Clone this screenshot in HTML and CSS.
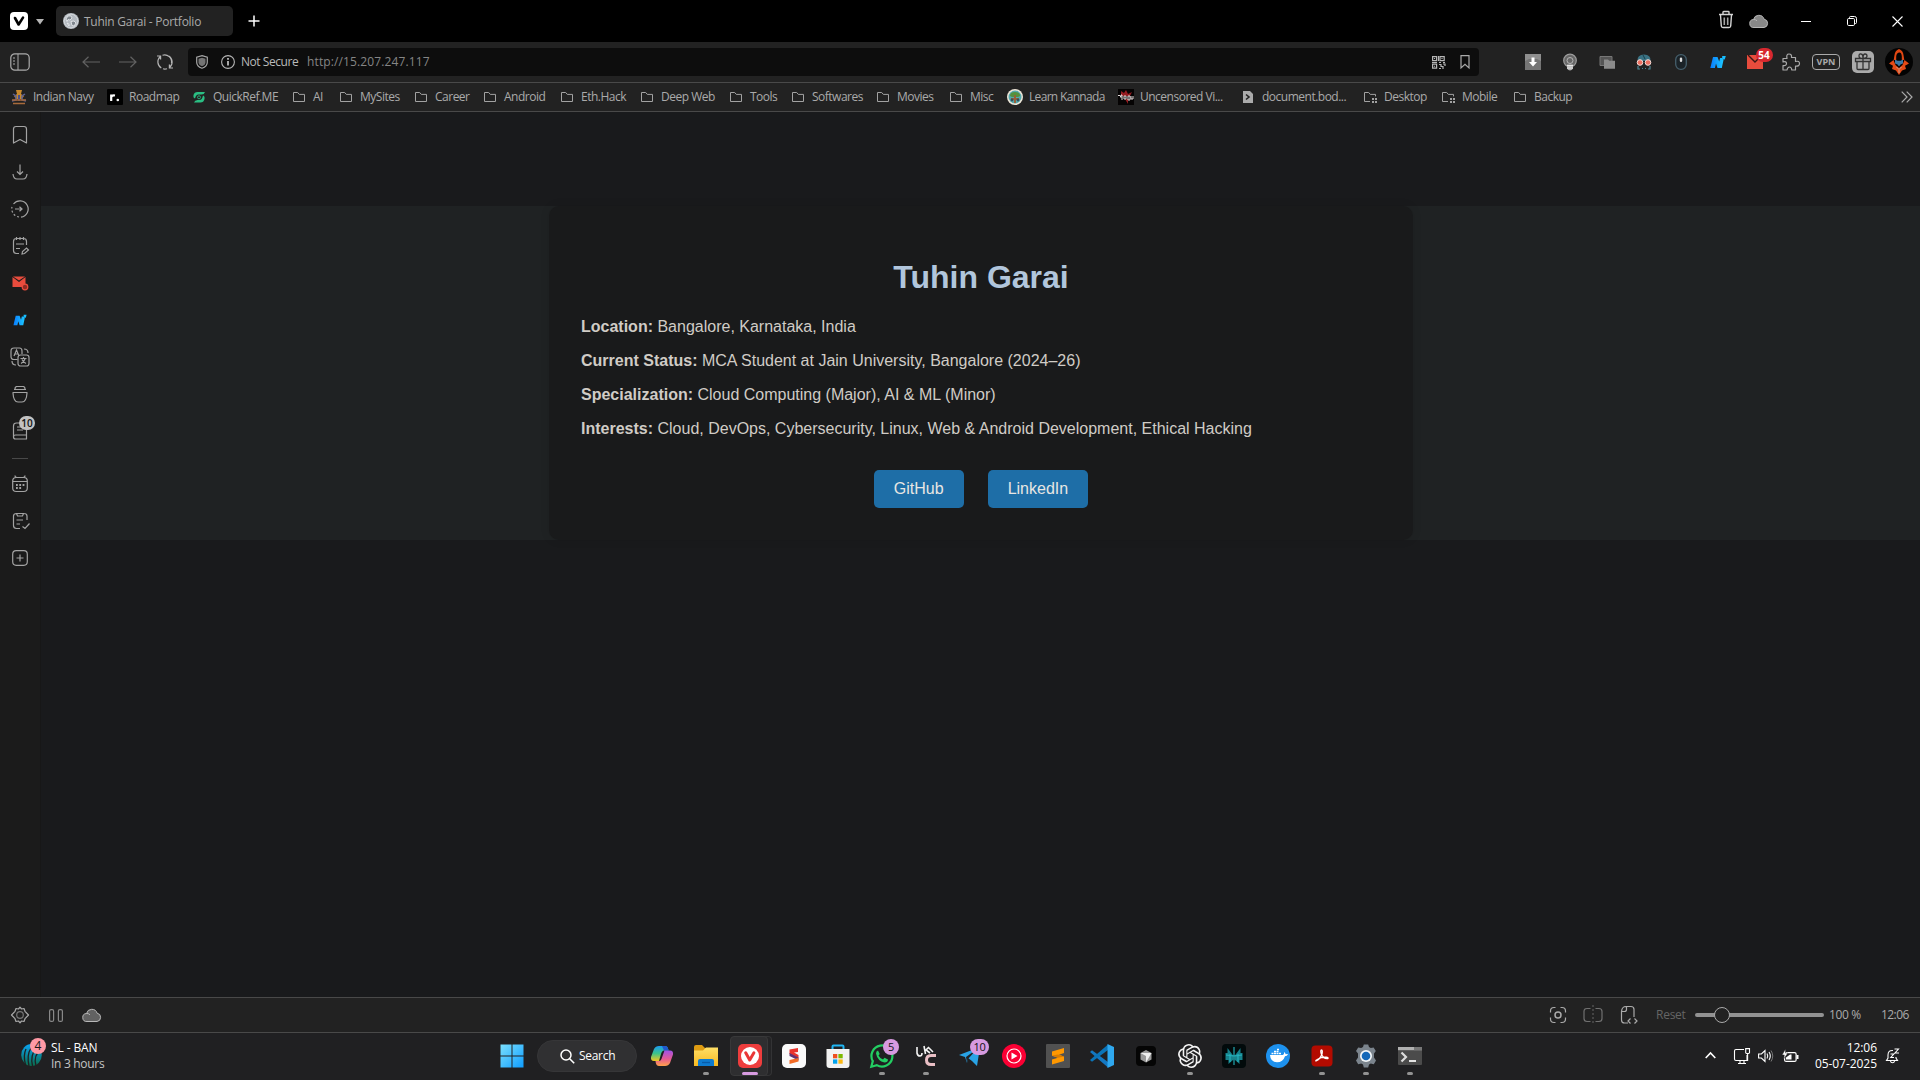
FILE: index.html
```html
<!DOCTYPE html>
<html lang="en">
<head>
<meta charset="utf-8">
<title>Tuhin Garai - Portfolio</title>
<link rel="stylesheet" href="styles.css">
</head>
<body>
<svg class="defs" width="0" height="0">
  <defs>
    <linearGradient id="win" x1="0" y1="0" x2="1" y2="1"><stop offset="0" stop-color="#7be0fd"/><stop offset="1" stop-color="#0f9dff"/></linearGradient>
    <linearGradient id="globe" x1="0" y1="0" x2="0" y2="1"><stop offset="0" stop-color="#0aa5f5"/><stop offset="1" stop-color="#0a6b4b"/></linearGradient>
    <linearGradient id="cop1" x1="0" y1="0" x2="0" y2="1"><stop offset="0" stop-color="#1c9bf0"/><stop offset=".5" stop-color="#3cc48a"/><stop offset="1" stop-color="#f3c81e"/></linearGradient>
    <linearGradient id="cop2" x1="0" y1="0" x2="0" y2="1"><stop offset="0" stop-color="#a052e8"/><stop offset=".55" stop-color="#e65b92"/><stop offset="1" stop-color="#ffa24a"/></linearGradient>
    <linearGradient id="fold" x1="0" y1="0" x2="0" y2="1"><stop offset="0" stop-color="#ffdf66"/><stop offset="1" stop-color="#f8b920"/></linearGradient>
    <linearGradient id="en" x1="0" y1="0" x2="1" y2="0"><stop offset="0" stop-color="#0a7cff"/><stop offset="1" stop-color="#1cc8ff"/></linearGradient>
    <symbol id="folder" viewBox="0 0 16 16"><path d="M2.5 3.5h4.2l1.6 1.9h5.2v7.1h-11z" fill="none" stroke="#a2a2a2"/></symbol>
    <symbol id="folder-grid" viewBox="0 0 16 16"><path d="M8 12.500H2.500v-9h4.200l1.600 1.900h5.200v2" fill="none" stroke="#a2a2a2"/><path d="M10 9h2v2h-2zM13 9h2v2h-2zM10 12h2v2h-2zM13 12h2v2h-2z" fill="#a2a2a2"/></symbol>
    <symbol id="cloud" viewBox="0 0 20 16"><path d="M5 14.500a4 4 0 0 1-.5-8 5.500 5.500 0 0 1 10.600-.3A4.200 4.200 0 0 1 15 14.500z" fill="currentColor"/><path d="M5 14.500a4 4 0 0 1-.5-8q2-.3 3.500 1.300M4.500 6.500a5.500 5.500 0 0 1 10.600-.3A4.200 4.200 0 0 1 15 14.500H5" fill="none" stroke="#b8b8b8"/></symbol>
    <symbol id="ns" viewBox="0 0 16 14"><path d="M3 2h4.500l1.700 4.600L10.100 3H12l1.500 2-1.700 8H7.500L6 8.600 4.900 13H.3z" fill="url(#en)"/><path d="M12.200 1h3.600l-1.100 3.500h-2.500z" fill="#18bdff"/></symbol>
  </defs>
</svg>
<div class="screen">
  <header class="titlebar">
    <svg class="logo" width="18" height="18" viewBox="0 0 18 18"><rect width="18" height="18" rx="4" fill="#fff"/><path d="M5 6l3.600 6.500L13 5.600" fill="none" stroke="#000" stroke-width="2.600" stroke-linecap="round" stroke-linejoin="round"/></svg>
    <svg class="caret" width="8" height="6" viewBox="0 0 8 6"><path d="M0 0h8L4 5.500z" fill="#b5b5b5"/></svg>
    <div class="tab">
      <svg width="16" height="16" viewBox="0 0 16 16"><circle cx="8" cy="8" r="8" fill="#b4bac0"/><circle cx="8" cy="8" r="6.800" fill="none" stroke="#d9dde0" stroke-width=".8"/><path d="M3 6l2-3h3l1 2-2 2-2-.5-1 2zM8 8.500l3-.5 2 2-2 3-2-.5zM4 10l2 1v2z" fill="#7f868d" stroke="#eceff1" stroke-width=".8"/></svg>
      <span>Tuhin Garai - Portfolio</span>
    </div>
    <svg class="plus" width="12" height="12" viewBox="0 0 12 12"><path d="M6 .5v11M.5 6h11" stroke="#fff" stroke-width="1.500"/></svg>
    <div class="wincontrols">
      <svg width="16" height="20" viewBox="0 0 16 20"><path d="M1 4.500h14M5 4V2.200q0-.7.7-.7h4.600q.7 0 .7.700V4M2.500 5l.8 11q.1 1.500 1.700 1.500h6q1.600 0 1.700-1.500l.8-11" fill="none" stroke="#d4d4d4" stroke-width="1.400"/><path d="M6.300 7.500v7.500M9.700 7.500v7.500" stroke="#a5a5a5" stroke-width="1.600"/></svg>
      <svg class="sync" width="20" height="16"><use href="#cloud"/></svg>
      <svg width="10" height="10" viewBox="0 0 10 10"><path d="M0 5.500h10" stroke="#fff"/></svg>
      <svg width="10" height="10" viewBox="0 0 10 10"><rect x=".5" y="2.500" width="7" height="7" rx="1.200" fill="none" stroke="#fff"/><path d="M2.500 2V1.500q0-1 1-1h4q2 0 2 2v4q0 1-1 1H8" fill="none" stroke="#fff"/></svg>
      <svg width="11" height="11" viewBox="0 0 11 11"><path d="M.5.500l10 10M10.500.500l-10 10" stroke="#fff" stroke-width="1.100"/></svg>
    </div>
  </header>

  <nav class="toolbar">
    <svg class="panelbtn" width="20" height="18" viewBox="0 0 20 18"><rect x=".8" y=".8" width="18.400" height="16.400" rx="4" fill="none" stroke="#aaa" stroke-width="1.200"/><path d="M8 1v16" stroke="#aaa"/><path d="M3 5h3M3 8h3M3 11h3" stroke="#aaa" stroke-dasharray="2 1"/></svg>
    <svg width="18" height="12" viewBox="0 0 18 12"><path d="M18 6H1M6.500.700L1 6l5.500 5.300" fill="none" stroke="#626262" stroke-width="1.200"/></svg>
    <svg width="18" height="12" viewBox="0 0 18 12"><path d="M0 6h17M11.500.700L17 6l-5.500 5.300" fill="none" stroke="#626262" stroke-width="1.200"/></svg>
    <svg width="18" height="18" viewBox="0 0 18 18"><path d="M5.300 15A7 7 0 0 1 4.200 3.800M6.500 2.200a7 7 0 0 1 9 7.800M12.700 3A7 7 0 0 1 13.800 14.200M7 15.800q2 .6 4-.1M1 3h3.600v3.600M17 15h-3.600v-3.600" fill="none" stroke="#b5b5b5" stroke-width="1.200"/></svg>
    <div class="address">
      <svg width="12" height="14" viewBox="0 0 12 14"><path d="M6 .7l5.300 1.500v5Q11.300 11.500 6 13.300.7 11.500.7 7.200v-5z" fill="none" stroke="#a5a5a5" stroke-width="1.200"/><path d="M6 2.700l3.500 1v3.500Q9.500 10 6 11.300 2.500 10 2.500 7.200V3.700z" fill="#747474"/></svg>
      <svg width="14" height="14" viewBox="0 0 14 14"><circle cx="7" cy="7" r="6.400" fill="none" stroke="#b5b5b5" stroke-width="1.100"/><path d="M7 3v1.800M7 6v4.500" stroke="#d0d0d0" stroke-width="1.600"/></svg>
      <span class="secure">Not Secure</span>
      <span class="url">http://15.207.247.117</span>
      <svg class="qr" width="13" height="13" viewBox="0 0 13 13"><path d="M.6.600h4v4h-4zM8 .6h4.200v4H8zM.6 8.200h4v4h-4z" fill="none" stroke="#b5b5b5" stroke-width="1.200"/><path d="M6.500 0v5M0 6.500h5M7 6.500h2M11 6.500h2M7 8.500h2v2h2v2.500M11 8h2v2M7 12.500h2M2.500 2v1M2.500 9.700v1M10 2v1" stroke="#b5b5b5" stroke-width="1.200" fill="none"/></svg>
      <svg class="bm" width="10" height="14" viewBox="0 0 10 14"><path d="M1 .6h8v12.300L5 9.300l-4 3.600z" fill="none" stroke="#aaa" stroke-width="1.200"/></svg>
    </div>
    <div class="extensions">
      <svg width="16" height="16" viewBox="0 0 16 16"><rect width="16" height="16" fill="#757575"/><path d="M0 0h16v7L12 5H4L0 7z" fill="#8f8f8f"/><path d="M6.500 3.500h3V8H12l-4 4.500L4 8h2.500z" fill="#fff"/></svg>
      <svg width="16" height="18" viewBox="0 0 16 18"><circle cx="8" cy="7.500" r="6.300" fill="#666" stroke="#9d9d9d" stroke-width="1.200"/><circle cx="8" cy="7.500" r="3" fill="none" stroke="#b4b4b4"/><path d="M5 11.500h6v4q-1.200 2-3 2t-3-2z" fill="#b0b0b0"/><path d="M5 12.700h6M5 15h6" stroke="#e4e4e4" stroke-width="1.200"/></svg>
      <svg width="16" height="16" viewBox="0 0 16 16"><path d="M1 2.500h12v9H1z" fill="#555" stroke="#777"/><path d="M5 5.500h4l1.200 1.200H16v8H5z" fill="#8b8b8b"/></svg>
      <svg width="16" height="16" viewBox="0 0 16 16"><path d="M1.500 7Q1 .5 8 .5T14.500 7z" fill="#3a7283"/><path d="M7 1l2 4" stroke="#183f4c"/><circle cx="4" cy="8.500" r="2.800" fill="#ed6f60" stroke="#f6ddd8"/><circle cx="12" cy="8.500" r="2.800" fill="#ed6f60" stroke="#f6ddd8"/><path d="M2 12v3h2M14 12v3h-2M6 14.500h1M9 14.500h1" fill="none" stroke="#4e8796" stroke-width="1.200"/></svg>
      <svg width="12" height="16" viewBox="0 0 12 16"><rect x=".7" y=".7" width="10.600" height="14.600" rx="5" fill="#1b2328" stroke="#455f6c" stroke-width="1.300"/><rect x="4.800" y="3.500" width="2.400" height="4.500" rx="1.200" fill="#ddd"/></svg>
      <svg width="16" height="14"><use href="#ns"/></svg>
      <div class="badged"><svg width="16" height="14" viewBox="0 0 16 14"><path d="M0 0h16v14H0z" fill="#e84c3d"/><path d="M1 0l7 7 7-7" fill="none" stroke="#3a1815" stroke-width="1.400"/></svg><b class="badge-red">54</b></div>
      <svg width="18" height="18" viewBox="0 0 18 18"><path d="M1 5.500h4Q4 1 7 1t2.500 3.500h4v4Q17.500 7.500 17.500 10.500T13.500 13v4H9.800Q9.500 14 7.500 14T5 17H1v-4.500Q4.500 13 4.500 10.500T1 9z" fill="none" stroke="#aaa" stroke-width="1.200" stroke-linejoin="round"/></svg>
      <span class="vpn">VPN</span>
      <svg width="22" height="22" viewBox="0 0 22 22"><rect width="22" height="22" rx="5" fill="#ababab"/><path d="M3.500 7.500h15v3h-15zM5 10.500v7q0 1 1 1h10q1 0 1-1v-7M11 7.500v11M11 7.500Q7 7.500 7 5t2-2q2 0 2 4.500 0-4.500 2-4.500t2 2-4 2.500" fill="none" stroke="#333" stroke-width="1.300"/></svg>
      <svg width="28" height="28" viewBox="0 0 28 28"><circle cx="14" cy="14" r="14" fill="#030303"/><path d="M14 1q-4 1.500-4.500 6L8.700 12h2.500V8.500Q11.500 5 14 4.500t2.800 4V12h2.500l-.8-5Q18 2.500 14 1z" fill="#e04612"/><path d="M8.500 12L4 15.500l4 2.200-1 3.300 4 1.500 3 4.500 3-4.500 4-1.500-1-3.300 4-2.200-4.500-3.500-2 5L14 20l-3.500-3z" fill="#e34a17"/><path d="M10 11.500l2.500 1.200h3l2.500-1.200v4l-2.500 1L14 18.500l-1.500-2-2.500-1z" fill="#3c78a5"/><path d="M11.500 19l2.500 2.500 2.500-2.500M14 22v3" fill="none" stroke="#c9a08d"/></svg>
    </div>
  </nav>

  <nav class="bookmarks">
    <div class="item"><svg width="16" height="16" viewBox="0 0 16 16"><path d="M5 1h6l-1 4 3 2-2 3H5L3 7l3-2z" fill="#c8892d"/><path d="M2 5l3 2v4l-4 1M14 5l-3 2v4l4 1" stroke="#5b6095" stroke-width="1.500" fill="none"/><path d="M8 6v6" stroke="#4a5189" stroke-width="2"/><path d="M1 11h14M2 14.500h12" stroke="#a86a3b" stroke-width="1.600"/></svg><span>Indian Navy</span></div>
    <div class="item"><svg width="16" height="16" viewBox="0 0 16 16"><rect width="16" height="16" rx="1" fill="#000"/><path d="M4.200 12V5.500M4.300 8q.6-2 3.700-1.500" fill="none" stroke="#fff" stroke-width="2.200"/><circle cx="10.800" cy="11" r="1.300" fill="#fff"/></svg><span>Roadmap</span></div>
    <div class="item"><svg width="16" height="16" viewBox="0 0 16 16"><path d="M4 9.500Q2 9 2.500 6q.8-3 4-3H14q-.8 2.500-3.500 2.500H7.500Q5 5.500 4 9.500z" fill="#2abf83"/><path d="M12 6.500q2 .5 1.500 3.500-.8 3.500-4 3.500H3q.8-2.500 3.500-2.500h2Q11 11 12 6.500z" fill="#2abf83"/><circle cx="8" cy="8.300" r="1.500" fill="none" stroke="#28a978"/></svg><span>QuickRef.ME</span></div>
    <div class="item"><svg width="16" height="16"><use href="#folder"/></svg><span>AI</span></div>
    <div class="item"><svg width="16" height="16"><use href="#folder"/></svg><span>MySites</span></div>
    <div class="item"><svg width="16" height="16"><use href="#folder"/></svg><span>Career</span></div>
    <div class="item"><svg width="16" height="16"><use href="#folder"/></svg><span>Android</span></div>
    <div class="item"><svg width="16" height="16"><use href="#folder"/></svg><span>Eth.Hack</span></div>
    <div class="item"><svg width="16" height="16"><use href="#folder"/></svg><span>Deep Web</span></div>
    <div class="item"><svg width="16" height="16"><use href="#folder"/></svg><span>Tools</span></div>
    <div class="item"><svg width="16" height="16"><use href="#folder"/></svg><span>Softwares</span></div>
    <div class="item"><svg width="16" height="16"><use href="#folder"/></svg><span>Movies</span></div>
    <div class="item"><svg width="16" height="16"><use href="#folder"/></svg><span>Misc</span></div>
    <div class="item tight"><svg width="16" height="16" viewBox="0 0 16 16"><circle cx="8" cy="8" r="8" fill="#eee6d8"/><circle cx="8" cy="8" r="6.500" fill="#54a9ad"/><path d="M3 7q0-4 5-4t5 4l-2 1H5z" fill="#56913e"/><path d="M8 6v8M4 10h8" stroke="#97613a" stroke-width="2"/><circle cx="5" cy="11" r="1.400" fill="#35505c"/><circle cx="11" cy="11" r="1.400" fill="#35505c"/></svg><span>Learn Kannada</span></div>
    <div class="item"><svg width="16" height="16" viewBox="0 0 16 16"><rect width="16" height="16" fill="#050303"/><path d="M3 2l3 2 2-3 2 4 4-2-2 4H3zM7 10l3 5v-5z" fill="#941b20"/><path d="M0 6.500h2l1 2V6h1v5M6 7h2v3H6zM10 7h2v4h-2zM13 7v3h2V7" fill="none" stroke="#e5dcdc"/></svg><span>Uncensored Vi...</span></div>
    <div class="item"><svg width="16" height="16" viewBox="0 0 16 16"><path d="M3 2h7l3 3v9H3z" fill="#ababab"/><path d="M6 5.500L9 8l-3 2.500" fill="none" stroke="#222" stroke-width="1.600"/></svg><span>document.bod...</span></div>
    <div class="item"><svg width="16" height="16"><use href="#folder-grid"/></svg><span>Desktop</span></div>
    <div class="item"><svg width="16" height="16"><use href="#folder-grid"/></svg><span>Mobile</span></div>
    <div class="item"><svg width="16" height="16"><use href="#folder"/></svg><span>Backup</span></div>
    <svg class="more" width="12" height="12" viewBox="0 0 12 12"><path d="M.700.700L6 6 .700 11.300M5.700.700L11 6l-5.300 5.300" fill="none" stroke="#aaa" stroke-width="1.200"/></svg>
  </nav>

  <div class="workspace">
    <aside class="panel">
      <div class="pi"><svg width="20" height="20" viewBox="0 0 20 20"><path d="M3.500 18V4q0-2.500 2.500-2.500h8q2.500 0 2.500 2.500v14L10 14.500z" stroke-linejoin="round"/></svg></div>
      <div class="pi"><svg width="20" height="20" viewBox="0 0 20 20"><path d="M10 2.500v10M7 9.500l3 3 3-3M3 12q.5 5 4 5h6q3.500 0 4-5"/></svg></div>
      <div class="pi"><svg width="20" height="20" viewBox="0 0 20 20"><path d="M3.500 5A8.200 8.200 0 1 1 11 18.200M5 10h7M9.500 7.800L12 10l-2.500 2.200"/><path d="M9 18A8.200 8.200 0 0 1 2 8" stroke-dasharray="2 2"/></svg></div>
      <div class="pi"><svg width="20" height="20" viewBox="0 0 20 20"><path d="M16.500 9V5.500q0-3-3-3h-7q-3 0-3 3v9q0 3 3 3H9M6.500 1v3M10 1v3M13.500 1v3M6 8h8M6 12.500h4M12 18l.5-2.500 4-3.500 2 2-4 3.500z"/></svg></div>
      <div class="pi"><svg width="20" height="20" viewBox="0 0 20 20"><path d="M2.500 4l6.500 5 6.500-5v10h-13z" fill="#e84c3d" stroke="none"/><path d="M3 3.500h12L9 7.500z" fill="#e84c3d" stroke="none"/><circle cx="15" cy="14" r="2.800" fill="#8f2b24" stroke="#e84c3d"/></svg></div>
      <div class="pi"><svg width="14" height="12" viewBox="0 0 16 14"><use href="#ns" width="16" height="14" stroke="none"/></svg></div>
      <div class="pi"><svg width="20" height="20" viewBox="0 0 20 20"><path d="M7.500 12.500H4q-3 0-3-3V4q0-3 3-3h5.500q2.500 0 2.500 3v3M4 9l2.500-6L9 9M5 7h3M14 2q4 0 4 4M2 14q0 4 4 4" /><rect x="8" y="8" width="11" height="11" rx="2.500"/><path d="M10.500 11.500h6M13.500 10v1.500M15 12q-1 3-4 4.500M12 12.500q1 2.500 4 4"/></svg></div>
      <div class="pi"><svg width="20" height="20" viewBox="0 0 20 20"><path d="M6 2.500h8M4 5.500h12M2.500 8.500h15M3 9q.5 9 5 9h4q4.500 0 5-9M5 5q0-2.500 2-2.500M15 5q0-2.500-2-2.500"/></svg></div>
      <div class="pi"><svg width="20" height="20" viewBox="0 0 20 20"><path d="M17 14H5.500Q3.500 14 3.500 16t2 2H17M3.500 16V5q0-3 3-3h7q3 0 3 3v13M7 6h4M7 9h6"/></svg><b class="badge-gray">10</b></div>
      <hr>
      <div class="pi"><svg width="20" height="20" viewBox="0 0 20 20"><rect x="2.700" y="3.500" width="14.600" height="14" rx="3.500"/><path d="M3 7.500h14M5 1.500q0 2 2 2M15 1.500q0 2-2 2"/><path d="M6 11h8.500M6 14h6" stroke-width="1.800" stroke-dasharray="1.800 1.500"/></svg></div>
      <div class="pi"><svg width="20" height="20" viewBox="0 0 20 20"><path d="M17 9V5q0-2.500-3-2.500H6.500q-3 0-3 2.500v9.500q0 3 3 3H10M6.500 2.500h7L12.500 5h-5zM6.500 9H13M6.500 13H10M12.500 15.500l2.500 2 4.500-5"/></svg></div>
      <div class="pi"><svg width="20" height="20" viewBox="0 0 20 20"><rect x="2.700" y="2.700" width="14.600" height="14.600" rx="3.500"/><path d="M10 6.500v7M6.500 10h7"/></svg></div>
    </aside>
    <main class="page">
      <section class="band">
        <article class="card">
          <h1>Tuhin Garai</h1>
          <p><strong>Location:</strong> Bangalore, Karnataka, India</p>
          <p><strong>Current Status:</strong> MCA Student at Jain University, Bangalore (2024–26)</p>
          <p><strong>Specialization:</strong> Cloud Computing (Major), AI &amp; ML (Minor)</p>
          <p><strong>Interests:</strong> Cloud, DevOps, Cybersecurity, Linux, Web &amp; Android Development, Ethical Hacking</p>
          <div class="links"><a>GitHub</a><a>LinkedIn</a></div>
        </article>
      </section>
    </main>
  </div>

  <footer class="status">
    <svg width="20" height="18" viewBox="0 0 20 18"><path d="M6 2.500l2.500.5L10 1.200 11.500 3l2.500-.5 1 2.800L18.500 9 15 12.700l-1 2.800-2.500-.5-1.500 1.800L8.500 15l-2.500.5-1-2.800L1.500 9 5 5.300z" fill="none" stroke="#aaa" stroke-width="1.200" stroke-linejoin="round"/><circle cx="10" cy="9" r="3.300" fill="none" stroke="#777" stroke-width="1.200"/></svg>
    <svg class="pause" width="14" height="13" viewBox="0 0 14 13"><rect x=".6" y=".6" width="4" height="11.800" rx="1.500"/><rect x="9.400" y=".6" width="4" height="11.800" rx="1.500"/></svg>
    <svg class="scloud" width="20" height="16"><use href="#cloud"/></svg>
    <div class="status-right">
      <svg width="18" height="18" viewBox="0 0 18 18"><path d="M1.500 6.500V5q0-3.500 3.500-3.500h1.500M11.500 1.500H13q3.500 0 3.500 3.500v1.500M16.500 11.500V13q0 3.500-3.500 3.500h-1.500M6.500 16.500H5q-3.500 0-3.500-3.500v-1.500" fill="none" stroke="#aaa" stroke-width="1.200"/><circle cx="9" cy="9" r="3" fill="none" stroke="#aaa" stroke-width="1.500"/></svg>
      <svg width="20" height="20" viewBox="0 0 20 20"><path d="M7.500 3.500H4Q1 3.500 1 6.500v7q0 3 3 3h3.500M12.500 3.500H16q3 0 3 3v7q0 3-3 3h-3.500" fill="none" stroke="#707070" stroke-width="1.200"/><path d="M10 0v20" stroke="#656565" stroke-dasharray="2 2"/></svg>
      <svg width="18" height="20" viewBox="0 0 18 20"><path d="M8 18H4.500q-3 0-3-3V6.500Q2 1.500 6 1.500h5q3 0 3 3V12M6.500 1.500V4.500q0 2-2 2h-3M10.500 13.500L8 16l2.500 2.500M14.500 13.500L17 16l-2.500 2.500" fill="none" stroke="#aaa" stroke-width="1.200"/></svg>
      <span class="reset">Reset</span>
      <div class="slider"><i></i></div>
      <span class="pct">100 %</span>
      <span class="clock">12:06</span>
    </div>
  </footer>

  <footer class="taskbar">
    <div class="widget">
      <div class="globe"><svg width="21" height="22" viewBox="0 0 21 22"><ellipse cx="10.500" cy="11" rx="10.300" ry="11" fill="url(#globe)"/><path d="M5 5Q2 11 4.500 21M10 4Q5.500 11 8 22M15 5Q9 11 11.500 22M20 6Q12 11 15 22" fill="none" stroke="#202023" stroke-width="1.300"/></svg><b>4</b></div>
      <div class="wtext"><span>SL - BAN</span><span class="dim">In 3 hours</span></div>
    </div>
    <div class="apps">
      <div class="app"><svg width="24" height="24" viewBox="0 0 24 24"><path d="M.5.500h11v11H.5zM12.500.500h11v11h-11zM.5 12.500h11v11H.5zM12.500 12.500h11v11h-11z" fill="url(#win)"/></svg></div>
      <div class="search"><svg width="15" height="15" viewBox="0 0 15 15"><circle cx="6" cy="6" r="5" fill="none" stroke="#fff" stroke-width="1.500"/><path d="M9.700 9.700l4.500 4.500" stroke="#fff" stroke-width="1.600"/></svg><span>Search</span></div>
      <div class="app"><svg width="24" height="24" viewBox="0 0 24 24"><path d="M9 2h6q2.500 0 3.200 3l.4 1.500H14Q12 6.500 11 10L9 17H4q-3.500 0-3-4L4 5q1.500-3 5-3z" fill="url(#cop1)"/><path d="M12 2h3q2.500 0 3.200 3l.4 1.500H14z" fill="#2059cd"/><path d="M15 22H9q-2.500 0-3.200-3L5.500 17H9q2 0 3-3.500L14.500 6.500H20q3.500 0 3 4L20 19q-1.500 3-5 3z" fill="url(#cop2)"/></svg></div>
      <div class="app run"><svg width="24" height="24" viewBox="0 0 24 24"><path d="M0 3q0-2 2-2h6l3 3h13v5H0z" fill="#dd9b12"/><path d="M0 6.500h9L12 3.500h12V22H0z" fill="url(#fold)"/><path d="M4 22v-5q0-2 2-2h12q2 0 2 2v5z" fill="#0e7bd0"/><path d="M8 18.500h8" stroke="#075ba8" stroke-width="1.300"/></svg></div>
      <div class="app active"><svg width="24" height="24" viewBox="0 0 24 24"><rect width="24" height="24" rx="5" fill="#ee3d3d"/><circle cx="12" cy="12" r="9" fill="#fff"/><path d="M7.700 8.800l4 7.200 4.200-7.200" fill="none" stroke="#e93636" stroke-width="3" stroke-linecap="round" stroke-linejoin="round"/></svg></div>
      <div class="app"><svg width="24" height="24" viewBox="0 0 24 24"><rect width="24" height="24" rx="5" fill="#fafafa"/><path d="M7.500 5.500L16 4v4l-4 .5 4.500 2.500v3L7.500 10z" fill="#e9342d"/><path d="M7.500 9l9 4.500v3l-5-2.500-4-2z" fill="#613273"/><path d="M16.500 14v3.500L7.500 20v-4z" fill="#f36b26"/></svg></div>
      <div class="app"><svg width="24" height="24" viewBox="0 0 24 24"><path d="M6.500 6V2.500q0-1 1-1h9q1 0 1 1V6" fill="none" stroke="#20b6f4" stroke-width="2"/><path d="M.5 5h23v16q0 3-3 3h-17q-3 0-3-3z" fill="#f2f2f2"/><path d="M7 10h4.300v4.300H7z" fill="#ef5020"/><path d="M12.400 10h4.300v4.300h-4.300z" fill="#7db900"/><path d="M7 15.400h4.300v4.300H7z" fill="#02a3ee"/><path d="M12.400 15.400h4.300v4.300h-4.300z" fill="#fcb813"/></svg></div>
      <div class="app run"><svg width="24" height="24" viewBox="0 0 24 24"><path d="M1.300 22.700l1.500-5.600a10.500 10.500 0 1 1 4 4z" fill="none" stroke="#23ce62" stroke-width="2.200"/><path d="M8 6.500l1.700 3.500-1.200 1.500q1.500 3 4.500 4l1.500-1.700 3.500 1.700q0 3-3.500 3Q7.500 17 6 9.500 6 7 8 6.500z" fill="#23ce62"/></svg><b class="badge-app">5</b></div>
      <div class="app run"><svg width="24" height="24" viewBox="0 0 24 24"><path d="M3 3v6q.5 3 3 3 2 0 2-3M10 2l1.500 8M15 3l-3 3 4 3M15 4l4 4" fill="none" stroke="#f4f4f4" stroke-width="1.600"/><path d="M22 11.500h-5q-4.500 0-4.500 4.500t4.500 4.500h4" fill="none" stroke="#e9bfc5" stroke-width="3"/></svg></div>
      <div class="app"><svg width="24" height="24" viewBox="0 0 24 24"><path d="M1 11L22 3l-3 19-5-5-4-3-1 5-2-6z" fill="#29a3e5"/><path d="M8 13l11-8-9 10-1 4z" fill="#222225"/></svg><b class="badge-app wide">10</b></div>
      <div class="app"><svg width="24" height="24" viewBox="0 0 24 24"><circle cx="12" cy="12" r="12" fill="#fb0034"/><circle cx="12" cy="12" r="7" fill="none" stroke="#fff" stroke-width="1.200"/><path d="M9.500 8.500v7l6-3.500z" fill="#fff"/></svg></div>
      <div class="app"><svg width="24" height="24" viewBox="0 0 24 24"><rect width="24" height="24" rx="1" fill="#515151"/><path d="M18 4v5l-5 1.700 5 1.800V17L6 20.500v-5l6-1.700-6-2V7.500z" fill="#ff9800"/><path d="M6 11.500l6 2.300 6-1.300-6-2z" fill="#d97c00"/></svg></div>
      <div class="app"><svg width="24" height="24" viewBox="0 0 24 24"><path d="M0 8l2-1.700L18 18v5.500z" fill="#1478c2"/><path d="M0 16l2 1.700L18 6V.5z" fill="#0b74b8"/><path d="M17.500 0L24 3v18l-6.500 3z" fill="#2fa8ef"/></svg></div>
      <div class="app"><svg width="20" height="20" viewBox="0 0 20 20"><rect width="20" height="20" rx="4" fill="#050505"/><path d="M10 4l5.500 3v6.500L10 16.500l-5.500-3V7z" fill="#999"/><path d="M4.500 7h11L10 16.500V10z" fill="#eee"/></svg></div>
      <div class="app run"><svg width="24" height="24" viewBox="0 0 24 24"><path fill="#f4f4f4" d="M22.2819 9.8211a5.9847 5.9847 0 0 0-.5157-4.9108 6.0462 6.0462 0 0 0-6.5098-2.9A6.0651 6.0651 0 0 0 4.9807 4.1818a5.9847 5.9847 0 0 0-3.9977 2.9 6.0462 6.0462 0 0 0 .7427 7.0966 5.98 5.98 0 0 0 .511 4.9107 6.051 6.051 0 0 0 6.5146 2.9001A5.9847 5.9847 0 0 0 13.2599 24a6.0557 6.0557 0 0 0 5.7718-4.2058 5.9894 5.9894 0 0 0 3.9977-2.9001 6.0557 6.0557 0 0 0-.7475-7.0729zm-9.022 12.6081a4.4755 4.4755 0 0 1-2.8764-1.0408l.1419-.0804 4.7783-2.7582a.7948.7948 0 0 0 .3927-.6813v-6.7369l2.02 1.1686a.071.071 0 0 1 .038.052v5.5826a4.504 4.504 0 0 1-4.4945 4.4944zm-9.6607-4.1254a4.4708 4.4708 0 0 1-.5346-3.0137l.142.0852 4.783 2.7582a.7712.7712 0 0 0 .7806 0l5.8428-3.3685v2.3324a.0804.0804 0 0 1-.0332.0615L9.74 19.9502a4.4992 4.4992 0 0 1-6.1408-1.6464zM2.3408 7.8956a4.485 4.485 0 0 1 2.3655-1.9728V11.6a.7664.7664 0 0 0 .3879.6765l5.8144 3.3543-2.0201 1.1685a.0757.0757 0 0 1-.071 0l-4.8303-2.7865A4.504 4.504 0 0 1 2.3408 7.872zm16.5963 3.8558L13.1038 8.364 15.1192 7.2a.0757.0757 0 0 1 .071 0l4.8303 2.7913a4.4944 4.4944 0 0 1-.6765 8.1042v-5.6772a.79.79 0 0 0-.407-.667zm2.0107-3.0231l-.142-.0852-4.7735-2.7818a.7759.7759 0 0 0-.7854 0L9.409 9.2297V6.8974a.0662.0662 0 0 1 .0284-.0615l4.8303-2.7866a4.4992 4.4992 0 0 1 6.6802 4.66zM8.3065 12.863l-2.02-1.1638a.0804.0804 0 0 1-.038-.0567V6.0742a4.4992 4.4992 0 0 1 7.3757-3.4537l-.142.0805L8.704 5.459a.7948.7948 0 0 0-.3927.6813zm1.0976-2.3654l2.602-1.4998 2.6069 1.4998v2.9994l-2.5974 1.4997-2.6067-1.4997Z"/></svg></div>
      <div class="app"><svg width="24" height="24" viewBox="0 0 24 24"><rect width="24" height="24" rx="4" fill="#020a0b"/><path d="M11.500 12L5.500 4v5H3.500v7h3v4l5-4.500zM12.500 12l6-8v5h2v7h-3v4l-5-4.500z" fill="#17828c"/><path d="M12 3v18M8 10v8M16 10v8M12 12L4 11M12 12l8-1" stroke="#25b5c0" stroke-width="1.100"/></svg></div>
      <div class="app"><svg width="24" height="24" viewBox="0 0 24 24"><circle cx="12" cy="12" r="12" fill="#1d91ee"/><path d="M4 11h13q1.500-1 1-3 1.500 1 1.700 2.300 1.800-.5 2.300 0-1 2-3 2-2 6-8 6-6.500 0-7-7.300z" fill="#fff"/><path d="M5.500 9.500h10M8 7.500h5M11 5.500h2" stroke="#fff" stroke-width="1.700" stroke-dasharray="2 .5"/></svg></div>
      <div class="app run"><svg width="22" height="22" viewBox="0 0 22 22"><rect x=".5" y=".5" width="21" height="21" rx="4" fill="#b30b00"/><path d="M5 16q4-1.500 6-7 .8-4-.5-4t-.2 4q2 5 6.500 4.500 1-.8-1.500-1.300-5-.3-9 2.300-2 1-1.300 1.500z" fill="none" stroke="#fff" stroke-width="1.300"/></svg></div>
      <div class="app run"><svg width="24" height="24" viewBox="0 0 24 24"><path d="M9 3l.8-2.500h4.400L15 3l1.800 1 2.800-.5 2.200 3.600L20 9.500v4l2 3-2.200 3.700-3-.7L15 20.500l-.8 3H9.800l-.8-3-1.800-1-3 .7L2 16.500l2-3v-4L2 7l2.200-3.600L7.200 4z" fill="#7b848d"/><circle cx="12" cy="12" r="6" fill="#f3f6f8"/><circle cx="12" cy="12" r="4.300" fill="#1467b8"/></svg></div>
      <div class="app run"><svg width="24" height="24" viewBox="0 0 24 24"><rect y="3" width="24" height="18" rx="1" fill="#4b4b4b"/><path d="M0 3h24v3.200H0z" fill="#b0b0b0"/><path d="M16 3h8v3.200h-8z" fill="#777"/><path d="M3.500 8.500l4.500 4.500-4.500 4.500" fill="none" stroke="#ddd" stroke-width="2.200"/><path d="M11 17h7" stroke="#fff" stroke-width="1.700"/></svg></div>
    </div>
    <div class="tray">
      <svg width="11" height="7" viewBox="0 0 11 7"><path d="M.7 6L5.500 1l4.800 5" fill="none" stroke="#fff" stroke-width="1.600"/></svg>
      <svg width="16" height="16" viewBox="0 0 16 16"><path d="M10 1.500H2q-1.500 0-1.500 1.500v8q0 1.500 1.500 1.500h11V7M4 15.500h8M6 12.500v3M10 12.500v3" fill="none" stroke="#fff" stroke-width="1.100"/><path d="M11.700.600h3.800v4.300q-1.900 1.500-3.800 0zM13.600 6v7" fill="none" stroke="#fff" stroke-width="1.100"/></svg>
      <svg width="16" height="14" viewBox="0 0 16 14"><path d="M.6 5h2.800L7 1.500v11L3.400 9H.6z" fill="none" stroke="#fff" stroke-width="1.100"/><path d="M9 4.500q1.500 2.500 0 5M11 3q2.600 4 0 8" fill="none" stroke="#fff" stroke-width="1.100"/><path d="M13 1.500q3.500 5.500 0 11" fill="none" stroke="#777"/></svg>
      <svg width="17" height="14" viewBox="0 0 17 14"><rect x="2.600" y="3.600" width="11.500" height="8.800" rx="1.500" fill="none" stroke="#fff" stroke-width="1.200"/><path d="M14.500 6h2v4h-2zM8 5.500h1.500v5H4V8.500z" fill="#fff"/><path d="M3.500 0L0 6h2.500L1.500 10 6 4H3.500z" fill="#fff" stroke="#202023" stroke-width=".5"/></svg>
      <div class="when"><span>12:06</span><span>05-07-2025</span></div>
      <svg class="bell" width="15" height="16" viewBox="0 0 15 16"><path d="M8 2.500Q3 2 3 7v3l-1.500 2.500h11L11 10V9M5.500 13q.3 1.800 2 1.800T9.500 13M5.500 6h3.300L5.800 9.500H9M9.500 1h4L10 5h4" fill="none" stroke="#fff" stroke-width="1.100"/></svg>
    </div>
  </footer>
</div>
</body>
</html>
```

FILE: styles.css
```css
* { box-sizing: border-box; }
body { margin: 0; background: #18191a; }
svg { display: block; flex: none; overflow: visible; }
.defs { position: absolute; }
.screen {
  width: 1920px; height: 1080px; overflow: hidden;
  display: grid; grid-template-rows: 42px 41px 29px 885px 36px 47px;
  font: 12px/16px "Open Sans", "Noto Sans", sans-serif;
  letter-spacing: -.37px; color: #aaa; white-space: nowrap;
}

.titlebar { background: #000; display: flex; align-items: center; padding: 0 17px 0 10px; }
.caret { margin: 1px 12px 0 8px; }
.tab { width: 177px; height: 30px; border-radius: 5px; background: #222; display: flex; align-items: center; gap: 5px; padding-left: 7px; letter-spacing: -.26px; }
.tab span { padding-top: 2px; }
.plus { margin-left: 15px; }
.wincontrols { margin-left: auto; display: flex; align-items: center; height: 43px; }
.wincontrols svg:nth-child(1) { margin: 0 15px 2px 0; }
.sync { color: #888; margin-right: 32px; }
.wincontrols svg:nth-child(3) { margin-right: 36px; }
.wincontrols svg:nth-child(4) { margin-right: 35px; }

.toolbar { background: #222; border-bottom: 1px solid #494949; display: flex; align-items: center; padding: 0 3px 0 10px; }
.toolbar > svg { margin-right: 19px; }
.toolbar > svg.panelbtn { margin-right: 52px; }
.toolbar > svg:nth-child(4) { margin-right: 14px; }
.address { width: 1291px; height: 28px; border-radius: 4px; background: #0d0d0d; display: flex; align-items: center; padding: 0 9px 0 8px; }
.address svg:nth-child(2) { margin: 0 6px 0 13px; }
.secure { color: #bababa; width: 66px; letter-spacing: -.45px; }
.url { color: #858585; letter-spacing: .12px; }
.qr { margin-left: auto; }
.bm { margin-left: 15px; }
.extensions { margin-left: auto; display: grid; grid-template-columns: 37px 37px 37px 37px 37px 37px 37px 35px 36px 37px 36px; place-items: center; }
.badged { position: relative; width: 16px; height: 14px; }
.badge-red { position: absolute; left: 9px; top: -7px; width: 17px; height: 14px; border-radius: 7px; background: #d7282f; color: #fff; font: 700 10px/14px "Open Sans", sans-serif; text-align: center; letter-spacing: 0; }
.vpn { width: 28px; height: 16px; border: 1px solid #aaa; border-radius: 4px; font: 700 9px/14px "Open Sans", sans-serif; text-align: center; letter-spacing: 0; }

.bookmarks { background: #222; border-bottom: 1px solid #494949; display: grid; grid-template-columns: 96px 84px 100px 47px 75px 69px 77px 80px 89px 62px 85px 73px 59px 111px 122px 122px 78px 72px 389px 12px; align-items: center; padding-left: 11px; }
.item { display: flex; align-items: center; gap: 6px; letter-spacing: -.5px; }
.item.tight { letter-spacing: -.68px; }

.workspace { display: flex; }
.panel { width: 41px; background: #1b1b1b; border-right: 1px solid #171717; padding-top: 4px; display: flex; flex-direction: column; align-items: center; }
.pi { position: relative; width: 40px; height: 37px; display: grid; place-items: center; fill: none; stroke: #a3a3a3; stroke-width: 1.200px; }
.panel hr { width: 16px; height: 1px; border: 0; background: #494949; margin: 9px 0 6px; }
.badge-gray { position: absolute; left: 19px; top: 4px; width: 16px; height: 14px; border-radius: 7px; background: #c2c2c2; color: #111; font: 600 10px/14px "Open Sans", sans-serif; text-align: center; stroke: none; letter-spacing: 0; }

.page { flex: 1; background: #191a1c; padding-top: 94px; }
.band { background: #1f2223; height: 334px; }
.card { width: 864px; height: 334px; margin: 0 auto; position: relative; left: .5px; border-radius: 10px; background: #191a1b; box-shadow: 0 0 10px rgba(0,0,0,.1); padding: 32px; display: flow-root; font: 16px/18px "Liberation Sans", Arial, sans-serif; letter-spacing: 0; color: #d0ccc6; }
.card h1 { margin: 21px 0 22px; font-size: 32px; line-height: 37px; text-align: center; color: #b1c6dc; }
.card p { margin: 0 0 16px; }
.links { display: flex; justify-content: center; gap: 24px; padding-top: 16px; }
.links a { background: #1e6ea7; color: #e8e6e3; border-radius: 5px; padding: 10px 20px; }

.status { background: #222; border-top: 1px solid #494949; border-bottom: 1px solid #494949; display: flex; align-items: center; padding: 0 12px 0 10px; }
.pause { margin: 1px 19px 0 19px; fill: none; stroke: #888; stroke-width: 1.200px; }
.scloud { color: #626262; }
.status-right { margin-left: auto; display: flex; align-items: center; }
.status-right svg:nth-child(2) { margin: 0 17px 0 16px; }
.reset { color: #656565; margin-left: 18px; width: 39px; letter-spacing: -.25px; }
.slider { width: 129px; height: 4px; border-radius: 2px; background: #929292; position: relative; }
.slider i { position: absolute; left: 19px; top: -6px; width: 16px; height: 16px; border: 1px solid #aaa; border-radius: 50%; background: #222; }
.pct { margin-left: 5px; width: 52px; }
.clock { width: 27px; letter-spacing: -.55px; }

.taskbar { background: #202022; display: flex; position: relative; color: #fff; }
.widget { width: 490px; padding: 9px 0 0 21px; display: flex; gap: 9px; }
.globe { position: relative; padding-top: 2px; }
.globe b { position: absolute; top: -4px; left: 9px; width: 16px; height: 16px; border-radius: 50%; background: #ff99a5; color: #181818; font: 12px/16px "Open Sans", sans-serif; text-align: center; letter-spacing: 0; }
.wtext { display: grid; grid-template-rows: 16px 16px; margin-top: -2px; letter-spacing: -.1px; }
.wtext .dim { color: #c5c5c5; letter-spacing: -.3px; }
.apps { display: flex; align-items: center; height: 46px; }
.app { width: 44px; height: 40px; position: relative; display: grid; place-items: center; }
.search { width: 100px; height: 32px; border-radius: 16px; background: #303032; border: 1px solid #363638; margin: 0 3px; display: flex; align-items: center; gap: 4px; padding-left: 22px; letter-spacing: -.3px; }
.run::after, .active::after { content: ""; position: absolute; bottom: 1px; left: 19px; width: 6px; height: 3px; border-radius: 2px; background: #929292; }
.active::before { content: ""; position: absolute; inset: 0 5px 0 2px; width: 36px; border: 1px solid #383839; border-radius: 4px; background: #2e2e30; box-shadow: 4px 0 0 -1px #242426, 4px 0 0 0 #333335; }
.active svg { position: relative; }
.active::after { left: 14px; width: 16px; background: #d79ae0; }
.badge-app { position: absolute; left: 23px; top: 3px; width: 16px; height: 16px; border-radius: 8px; background: #d79ae0; color: #111; font: 11px/16px "Open Sans", sans-serif; text-align: center; letter-spacing: -.3px; }
.badge-app.wide { left: 22px; width: 19px; }
.tray { margin-left: auto; display: flex; align-items: center; padding-right: 20px; height: 45px; }
.tray > svg:nth-child(1) { margin-right: 18px; }
.tray > svg:nth-child(2) { margin-right: 8px; }
.tray > svg:nth-child(3) { margin-right: 8px; }
.when { width: 78px; display: grid; text-align: right; margin-right: 8px; letter-spacing: -.05px; }
```
